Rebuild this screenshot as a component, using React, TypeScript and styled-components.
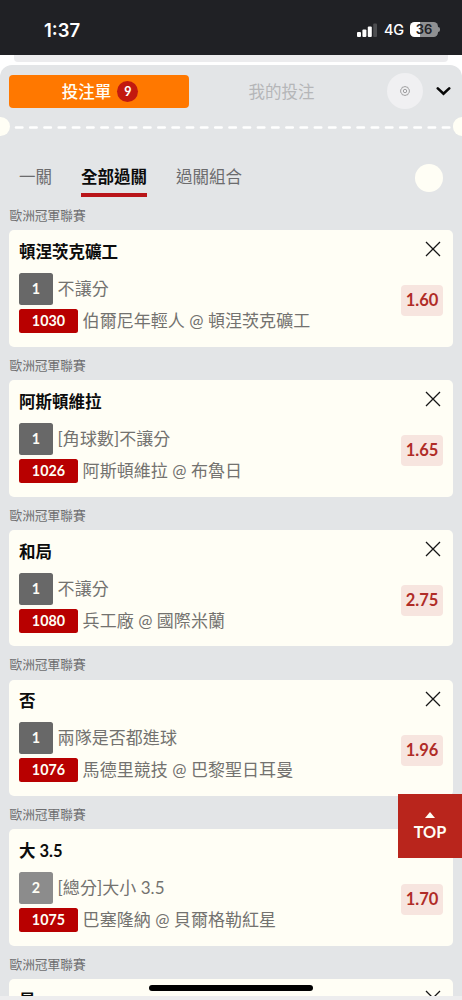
import React from "react";
import styled, { createGlobalStyle } from "styled-components";

const GlobalStyle = createGlobalStyle`
  * { box-sizing: border-box; }
  html, body { margin: 0; padding: 0; overflow: hidden; }
  body { background: #fff; font-family: Lato, "Noto Sans CJK TC", sans-serif; }
  button { border: 0; padding: 0; margin: 0; background: none; font-family: inherit; }
`;

const Phone = styled.div`
  position: relative;
  width: 462px;
  height: 1000px;
  overflow: hidden;
  display: flex;
  flex-direction: column;
  background: #fff;
`;

const StatusBar = styled.header`
  flex: none;
  height: 55.4px;
  display: flex;
  justify-content: space-between;
  padding: 0 22px 0 44px;
  background: #202125;
  color: #fff;
  font-family: Inter, sans-serif;
`;

const Clock = styled.span`
  font-size: 18.5px;
  font-weight: 600;
  line-height: 60px;
  letter-spacing: 0;
`;

const StatusIcons = styled.div`
  display: flex;
  align-items: center;
  height: 59px;
`;

const Network = styled.span`
  margin: 0 6px 0 7px;
  width: 20px;
  font-size: 14.5px;
  font-weight: 500;
  letter-spacing: -0.2px;
`;

const Battery = styled.span`
  width: 28px;
  height: 15px;
  border-radius: 4.5px;
  background: linear-gradient(90deg, #fff 36%, #8f9092 36%);
  color: #202125;
  font-size: 13px;
  font-weight: 600;
  line-height: 15px;
  text-align: center;
`;

const BatteryTip = styled.span`
  width: 2px;
  height: 5px;
  border-radius: 0 2px 2px 0;
  background: #8f9092;
`;

const PageEdge = styled.div`
  flex: none;
  height: 6.6px;
  margin: 0 14px 3px;
  border-radius: 0 0 4px 4px;
  background: #ececee;
`;

const Slip = styled.main`
  flex: none;
  height: 931px;
  overflow: hidden;
  border-radius: 12px 12px 0 0;
  background: #e3e5e7;
`;

const SlipHeader = styled.div`
  display: flex;
  align-items: center;
  height: 52.6px;
  padding: 0 10px 0 9px;
`;

const SlipTab = styled.button<{ $active?: boolean }>`
  display: flex;
  align-items: center;
  justify-content: center;
  gap: 6px;
  width: ${(p) => (p.$active ? 180 : 185)}px;
  height: 33.4px;
  padding-left: ${(p) => (p.$active ? 2 : 0)}px;
  border-radius: 4px;
  background: ${(p) => (p.$active ? "#ff7800" : "transparent")};
  color: ${(p) => (p.$active ? "#fffef5" : "#b5b6b8")};
  font-size: 16.5px;
  font-weight: ${(p) => (p.$active ? 500 : 400)};
`;

const Count = styled.span`
  width: 21px;
  height: 21px;
  border-radius: 50%;
  background: #c2190f;
  color: #fff;
  font-size: 12.5px;
  font-weight: 700;
  line-height: 21px;
  text-align: center;
`;

const SettingsButton = styled.button`
  display: flex;
  align-items: center;
  justify-content: center;
  width: 36px;
  height: 36px;
  margin-left: 13px;
  border-radius: 50%;
  background: #f0f0f2;
`;

const CollapseButton = styled.button`
  display: flex;
  margin-left: 13px;
`;

const Perforation = styled.div`
  display: flex;
  align-items: center;
  justify-content: space-between;
  height: 18.4px;
`;

const Notch = styled.span<{ $side: "left" | "right" }>`
  width: 9.5px;
  height: 19px;
  border-radius: ${(p) => (p.$side === "left" ? "0 10px 10px 0" : "10px 0 0 10px")};
  background: #fffef5;
`;

const DashedLine = styled.svg`
  flex: 1;
  height: 4px;
`;

const ModeBar = styled.nav`
  display: flex;
  align-items: flex-start;
  height: 61px;
  padding: 29px 19px 0;
`;

const ModeTab = styled.button<{ $active?: boolean }>`
  height: 32px;
  margin-right: 29px;
  border-bottom: 4px solid ${(p) => (p.$active ? "#b91519" : "transparent")};
  color: ${(p) => (p.$active ? "#0b0b0b" : "#6b6b6d")};
  font-size: 16.5px;
  font-weight: ${(p) => (p.$active ? 700 : 400)};
  line-height: 24px;
  padding-bottom: 4px;
`;

const RoundButton = styled.button`
  width: 28px;
  height: 28px;
  margin: -1px 0 0 auto;
  border-radius: 50%;
  background: #fffef5;
`;

const League = styled.h2`
  margin: 0;
  height: 33.4px;
  padding: 8px 0 0 9.5px;
  color: #6d6d6f;
  font-size: 12.7px;
  font-weight: 400;
  line-height: 20px;
`;

const Card = styled.article`
  display: flex;
  justify-content: space-between;
  height: 116.4px;
  margin: 0 9.4px;
  padding: 9px 9.6px;
  border-radius: 5px;
  background: #fffef5;
`;

const BetInfo = styled.div`
  display: flex;
  flex-direction: column;
`;

const Pick = styled.h3`
  margin: 0.6px 0 9.1px;
  color: #0c0c0c;
  font-size: 16.5px;
  font-weight: 700;
  line-height: 24px;
`;

const InfoRow = styled.div<{ $gap: number }>`
  display: flex;
  align-items: center;
  gap: 4.6px;
  margin-bottom: ${(p) => p.$gap}px;
  color: #73726f;
  font-size: 17px;
  letter-spacing: 0.05px;
  line-height: 24px;
  white-space: nowrap;
`;

const Tag = styled.span<{ $tone: "dark" | "light" | "red" }>`
  width: ${(p) => (p.$tone === "red" ? 59 : 34)}px;
  height: ${(p) => (p.$tone === "red" ? 24 : 32)}px;
  border-radius: 2.5px;
  background: ${(p) => ({ dark: "#686868", light: "#8c8c8c", red: "#b80000" })[p.$tone]};
  color: #fffef5;
  font-size: 14.3px;
  font-weight: 700;
  line-height: ${(p) => (p.$tone === "red" ? 24 : 32)}px;
  text-align: center;
`;

const BetActions = styled.div`
  display: flex;
  flex-direction: column;
  align-items: flex-end;
`;

const RemoveButton = styled.button`
  display: flex;
  margin: 2px 2px 28px 0;
`;

const Odds = styled.span`
  width: 42px;
  height: 31px;
  border-radius: 4px;
  background: #f7e5df;
  color: #b02c27;
  font-size: 16.5px;
  font-weight: 700;
  line-height: 31px;
  text-align: center;
`;

const TopButton = styled.button`
  position: absolute;
  right: 0;
  top: 794px;
  display: flex;
  flex-direction: column;
  align-items: center;
  width: 64px;
  height: 64px;
  padding-top: 18px;
  background: #b9251c;
  color: #fffef5;
  font-size: 16.3px;
  font-weight: 700;
  line-height: 28px;
`;

const HomeIndicator = styled.div`
  position: absolute;
  left: 149px;
  top: 984.5px;
  width: 164px;
  height: 6px;
  border-radius: 3px;
  background: #000;
`;

const BottomStrip = styled.footer`
  flex: none;
  height: 4px;
  background: #ededee;
`;

type Bet = { pick: string; no: string; market: string; code: string; match: string; odds: string };

const bets: Bet[] = [
  { pick: "頓涅茨克礦工", no: "1", market: "不讓分", code: "1030", match: "伯爾尼年輕人 @ 頓涅茨克礦工", odds: "1.60" },
  { pick: "阿斯頓維拉", no: "1", market: "[角球數]不讓分", code: "1026", match: "阿斯頓維拉 @ 布魯日", odds: "1.65" },
  { pick: "和局", no: "1", market: "不讓分", code: "1080", match: "兵工廠 @ 國際米蘭", odds: "2.75" },
  { pick: "否", no: "1", market: "兩隊是否都進球", code: "1076", match: "馬德里競技 @ 巴黎聖日耳曼", odds: "1.96" },
  { pick: "大 3.5", no: "2", market: "[總分]大小 3.5", code: "1075", match: "巴塞隆納 @ 貝爾格勒紅星", odds: "1.70" },
];

function RemoveIcon() {
  return (
    <RemoveButton aria-label="移除">
      <svg width="16" height="16" viewBox="0 0 16 16" fill="none" stroke="#161616" strokeWidth="1.3">
        <path d="M1 1L15 15M15 1L1 15" />
      </svg>
    </RemoveButton>
  );
}

function BetCard({ bet }: { bet: Bet }) {
  return (
    <section>
      <League>歐洲冠軍聯賽</League>
      <Card>
        <BetInfo>
          <Pick>{bet.pick}</Pick>
          <InfoRow $gap={4}>
            <Tag $tone={bet.no === "1" ? "dark" : "light"}>{bet.no}</Tag>
            {bet.market}
          </InfoRow>
          <InfoRow $gap={0}>
            <Tag $tone="red">{bet.code}</Tag>
            {bet.match}
          </InfoRow>
        </BetInfo>
        <BetActions>
          <RemoveIcon />
          <Odds>{bet.odds}</Odds>
        </BetActions>
      </Card>
    </section>
  );
}

export default function App() {
  return (
    <>
      <GlobalStyle />
      <Phone>
        <StatusBar>
          <Clock>1:37</Clock>
          <StatusIcons>
            <svg width="20" height="14" viewBox="0 0 20 14" fill="#fff">
              <rect x="0" y="9" width="4" height="5" rx="1" />
              <rect x="5.4" y="6.6" width="4" height="7.4" rx="1" />
              <rect x="10.8" y="3.6" width="4" height="10.4" rx="1" />
              <rect x="16.2" y="0.6" width="3.8" height="13.4" rx="1" fill="#4c4d50" />
            </svg>
            <Network>4G</Network>
            <Battery>36</Battery>
            <BatteryTip />
          </StatusIcons>
        </StatusBar>
        <PageEdge />
        <Slip>
          <SlipHeader>
            <SlipTab $active>
              投注單<Count>9</Count>
            </SlipTab>
            <SlipTab>我的投注</SlipTab>
            <SettingsButton aria-label="設定">
              <svg width="10" height="10" viewBox="0 0 10 10" fill="none" stroke="#8b8b8d" strokeWidth="0.8">
                <path d="M3.7 1L5 .5L6.3 1L7.8 1.3L8.4 2.8L9.5 4L9.1 5L9.5 6L8.4 7.3L7.8 8.7L6.3 9L5 9.5L3.7 9L2.2 8.7L1.6 7.3L.5 6L.9 5L.5 4L1.6 2.8L2.2 1.3Z" />
                <circle cx="5" cy="5" r="1.7" />
              </svg>
            </SettingsButton>
            <CollapseButton aria-label="收合">
              <svg width="15" height="10" viewBox="0 0 15 10" fill="none" stroke="#080808" strokeWidth="2.6" strokeLinecap="round">
                <path d="M1.8 2.4L7.5 7.8L13.2 2.4" />
              </svg>
            </CollapseButton>
          </SlipHeader>
          <Perforation>
            <Notch $side="left" />
            <DashedLine>
              <line x1="6" y1="2.5" x2="440" y2="2.5" stroke="#fff" strokeWidth="2.6" strokeDasharray="6.4 7.83" strokeLinecap="round" />
            </DashedLine>
            <Notch $side="right" />
          </Perforation>
          <ModeBar>
            <ModeTab>一關</ModeTab>
            <ModeTab $active>全部過關</ModeTab>
            <ModeTab>過關組合</ModeTab>
            <RoundButton aria-label="更多" />
          </ModeBar>
          {bets.map((bet) => (
            <BetCard key={bet.code} bet={bet} />
          ))}
          <League>歐洲冠軍聯賽</League>
          <Card>
            <Pick>是</Pick>
            <RemoveIcon />
          </Card>
        </Slip>
        <BottomStrip />
        <TopButton>
          <svg width="10" height="6" viewBox="0 0 10 6" fill="#fffef5">
            <path d="M5 0L10 6H0Z" />
          </svg>
          TOP
        </TopButton>
        <HomeIndicator />
      </Phone>
    </>
  );
}
